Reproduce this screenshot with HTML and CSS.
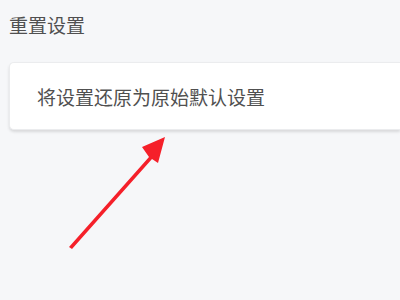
FILE: index.html
```html
<!DOCTYPE html>
<html lang="zh">
<head>
<meta charset="utf-8">
<link rel="stylesheet" href="styles.css">
</head>
<body>
<div class="page">
  <div class="section-title">重置设置</div>
  <div class="card">
    <span class="card-text">将设置还原为原始默认设置</span>
  </div>
</div>
<svg class="arrow" width="400" height="300" viewBox="0 0 400 300">
  <path d="M69 247 L149 157 L142 147 L165 137 L158 163 L152 159 L72 249 Z" fill="#f5202a"/>
</svg>
</body>
</html>
```
FILE: styles.css
```css
html, body {
  margin: 0;
  padding: 0;
  width: 400px;
  height: 300px;
  overflow: hidden;
  background: #f6f7f9;
  font-family: "Noto Sans CJK SC", "Noto Sans", sans-serif;
}
.page {
  display: flex;
  flex-direction: column;
  padding: 13px 0 0 9px;
}
.section-title {
  font-size: 19px;
  line-height: 24px;
  color: #505050;
}
.card {
  margin-top: 25px;
  height: 68px;
  box-sizing: border-box;
  background: #ffffff;
  border: 1px solid #ebecee;
  border-right: none;
  border-radius: 5px 0 0 5px;
  box-shadow: 0 2px 3px rgba(0,0,0,0.12);
  display: flex;
  align-items: center;
  padding-left: 27px;
}
.card-text {
  font-size: 19px;
  color: #505050;
}
.arrow {
  position: absolute;
  left: 0;
  top: 0;
}
```
